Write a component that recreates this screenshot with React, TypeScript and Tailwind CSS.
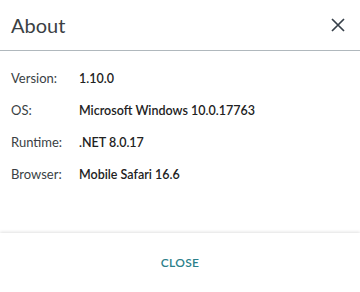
import React from "react";

export default function App() {
  const rows: [string, string][] = [
    ["Version:", "1.10.0"],
    ["OS:", "Microsoft Windows 10.0.17763"],
    ["Runtime:", ".NET 8.0.17"],
    ["Browser:", "Mobile Safari 16.6"],
  ];
  return (
    <div className="w-[360px] h-[292px] bg-white flex flex-col text-[#333]" style={{ fontFamily: "Lato, 'Noto Sans', sans-serif" }}>
      <div className="h-[51px] flex items-center justify-between pl-[11px] pr-[14px] border-b border-[#b0b8bd]">
        <span className="text-[20px] text-[#3a3f44]">About</span>
        <svg width="16" height="16" viewBox="0 0 16 16" className="text-[#37404a]">
          <path d="M2 2 L14 14 M14 2 L2 14" stroke="currentColor" strokeWidth="1.7" fill="none" />
        </svg>
      </div>
      <div className="flex-1 flex flex-col pt-[18px] px-[11px] gap-[13px]">
        {rows.map(([k, v]) => (
          <div key={k} className="flex items-baseline h-[19px]">
            <span className="w-[68px] text-[13px] text-[#3a3f44]">{k}</span>
            <span className="text-[12.5px] font-semibold text-[#222]">{v}</span>
          </div>
        ))}
      </div>
      <div className="h-[59px] flex items-center justify-center shadow-[0_-1px_3px_rgba(0,0,0,0.12)]">
        <span className="text-[12px] font-semibold tracking-[0.3px] text-[#2b7f8a]">CLOSE</span>
      </div>
    </div>
  );
}
